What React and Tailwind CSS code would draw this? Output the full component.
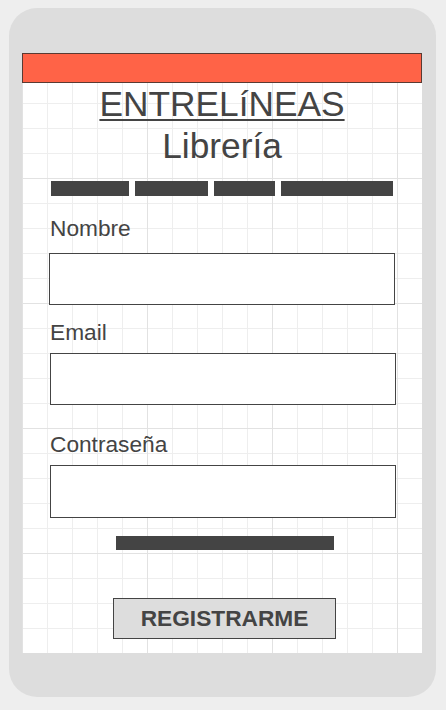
import React from 'react';

const navBars = [78, 73, 61, 112];

function Field({ label, top, inputTop, inputLeft = 'ml-[28px]' }) {
  return (
    <div>
      <div className={`${top} ml-[28px] text-[22.7px] leading-[26px] text-[#444]`}>{label}</div>
      <div className={`${inputTop} ${inputLeft} h-[52px] w-[346px] border-[1.5px] border-[#444] bg-white`} />
    </div>
  );
}

export default function App() {
  return (
    <div className="min-h-[710px] bg-[#eeeeee] pl-[9px] pt-[8px] font-['Liberation_Sans',Arial,sans-serif]">
      <div className="h-[689px] w-[427px] rounded-[28px] bg-[#dddddd] pl-[13px] pt-[45px]">
        <div className="h-[600px] w-[400px] bg-white bg-[linear-gradient(to_right,#e2e2e2_1px,transparent_1px),linear-gradient(to_bottom,#e2e2e2_1px,transparent_1px),linear-gradient(to_right,#eeeeee_1px,transparent_1px),linear-gradient(to_bottom,#eeeeee_1px,transparent_1px)] bg-[size:125px_125px,125px_125px,25px_25px,25px_25px]">
          {/* top bar */}
          <div className="h-[30px] border border-[#5a3a32] bg-[#ff6347]" />

          {/* title */}
          <div className="text-center text-[35.3px] leading-[42px] text-[#444]">
            <div className="underline decoration-2 underline-offset-[3px]">ENTRELíNEAS</div>
            <div>Librería</div>
          </div>

          {/* menu placeholder */}
          <div className="mt-[14px] flex h-[15px] pl-[29px]">
            {navBars.map((w, i) => (
              <div key={i} className={i === 0 ? 'h-full bg-[#444]' : 'ml-[6px] h-full bg-[#444]'} style={{ width: w }} />
            ))}
          </div>

          {/* form */}
          <Field label="Nombre" top="mt-[19px]" inputTop="mt-[12px]" inputLeft="ml-[27px]" />
          <Field label="Email" top="mt-[14px]" inputTop="mt-[8px]" />
          <div>
            <div className="ml-[28px] mt-[26px] text-[22.7px] leading-[26px] text-[#444]">Contraseña</div>
            <div className="ml-[28px] mt-[8px] h-[53px] w-[346px] border-[1.5px] border-[#444] bg-white" />
          </div>

          <div className="ml-[94px] mt-[18px] h-[14px] w-[218px] bg-[#444]" />

          <div className="ml-[91px] mt-[48px] flex h-[41px] w-[223px] items-center justify-center border border-[#444] bg-[#dddddd] text-[22.7px] font-bold text-[#444]">
            REGISTRARME
          </div>
        </div>
      </div>
    </div>
  );
}
